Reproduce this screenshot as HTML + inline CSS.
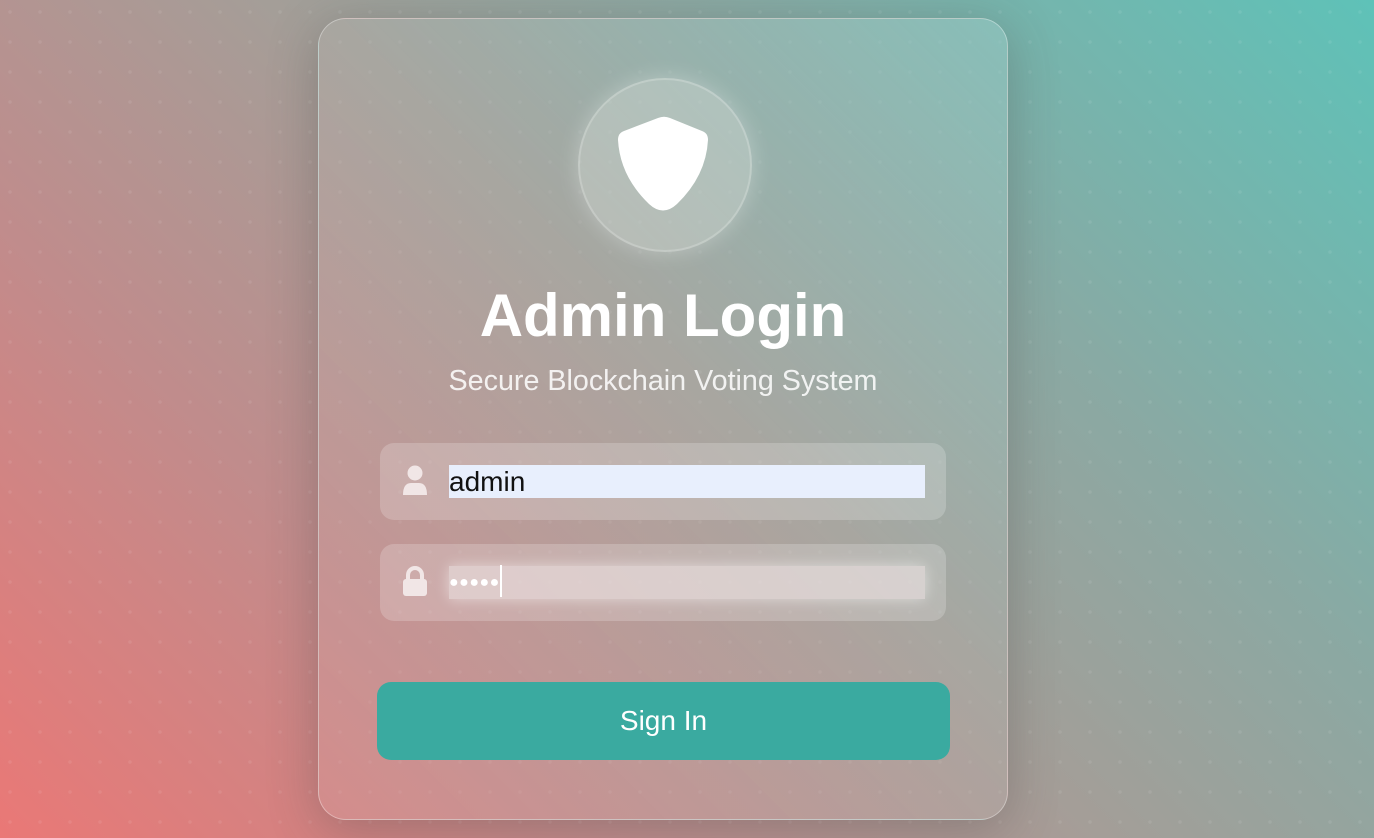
<!DOCTYPE html>
<html><head><style>
html,body{margin:0;padding:0;width:1374px;height:838px;overflow:hidden;}
body{font-family:"Liberation Sans",sans-serif;position:relative;
background:linear-gradient(225deg,#5ec2b8 0%,#8aa9a3 30%,#a49e98 50%,#c08c8c 72%,#ea7876 100%);}
.dots{position:absolute;inset:0;background-image:radial-gradient(circle,rgba(255,255,255,0.08) 1.6px,transparent 2px);background-size:30px 30px;background-position:-5px -3px;}
.card{position:absolute;left:318px;top:18px;width:688px;height:800px;border-radius:28px;border:1px solid rgba(255,255,255,0.35);
background:linear-gradient(225deg,rgba(150,200,195,0.55),rgba(180,180,175,0.35) 45%,rgba(215,155,155,0.4));
box-shadow:0 10px 50px rgba(60,60,60,0.3);}
.circle{position:absolute;left:259px;top:59px;width:170px;height:170px;border-radius:50%;background:rgba(220,225,222,0.35);border:2px solid rgba(255,255,255,0.2);box-shadow:0 0 22px rgba(255,255,255,0.3);}
h1{position:absolute;left:0;width:688px;top:262px;margin:0;text-align:center;color:#fff;font-size:60px;font-weight:bold;}
.sub{position:absolute;left:0;width:688px;top:346px;text-align:center;color:rgba(255,255,255,0.85);font-size:28.7px;}
.field{position:absolute;left:61px;width:566px;height:77px;border-radius:14px;background:rgba(255,255,255,0.2);}
.inp{position:absolute;left:69px;top:22px;width:476px;height:33px;}
.btn{position:absolute;left:58px;top:663px;width:573px;height:78px;border-radius:14px;background:#3aaaa0;color:#fff;font-size:28px;text-align:center;line-height:78px;}
</style></head><body>
<div class="dots"></div>
<div class="card">
  <div class="circle">
    <svg style="position:absolute;left:38px;top:36px" width="92" height="98" viewBox="0 0 92 98"><path d="M40 2 Q46 -0.5 52 2 L84 15 Q90 17 90 24 Q88 60 59 88 Q45 101 31 88 Q2 60 0 24 Q0 17 6 15 Z" fill="#fff"/></svg>
  </div>
  <h1>Admin Login</h1>
  <div class="sub">Secure Blockchain Voting System</div>
  <div class="field" style="top:424px">
    <svg style="position:absolute;left:22px;top:22px" width="26" height="32" viewBox="0 0 26 32"><circle cx="13" cy="8" r="7.5" fill="#f1e6e6"/><path d="M1 30 Q1 18 9 18 L17 18 Q25 18 25 30 Z" fill="#f1e6e6"/></svg>
    <div class="inp" style="background:#e8effd;font-size:28px;color:#111;line-height:34px;">admin</div>
  </div>
  <div class="field" style="top:525px">
    <svg style="position:absolute;left:22px;top:22px" width="26" height="32" viewBox="0 0 26 32"><path d="M6 14 V9 A7 7 0 0 1 20 9 V14" stroke="#f1e6e6" stroke-width="4" fill="none"/><rect x="1" y="13" width="24" height="17" rx="3" fill="#f1e6e6"/></svg>
    <div class="inp" style="background:rgba(235,225,225,0.6);box-shadow:0 0 14px rgba(255,255,255,0.5);color:#fff;font-size:16px;line-height:33px;letter-spacing:0.5px;">●●●●●<span style="display:inline-block;width:2px;height:32px;background:#fff;vertical-align:middle;margin-top:-4px;margin-left:0"></span></div>
  </div>
  <div class="btn">Sign In</div>
</div>
</body></html>
